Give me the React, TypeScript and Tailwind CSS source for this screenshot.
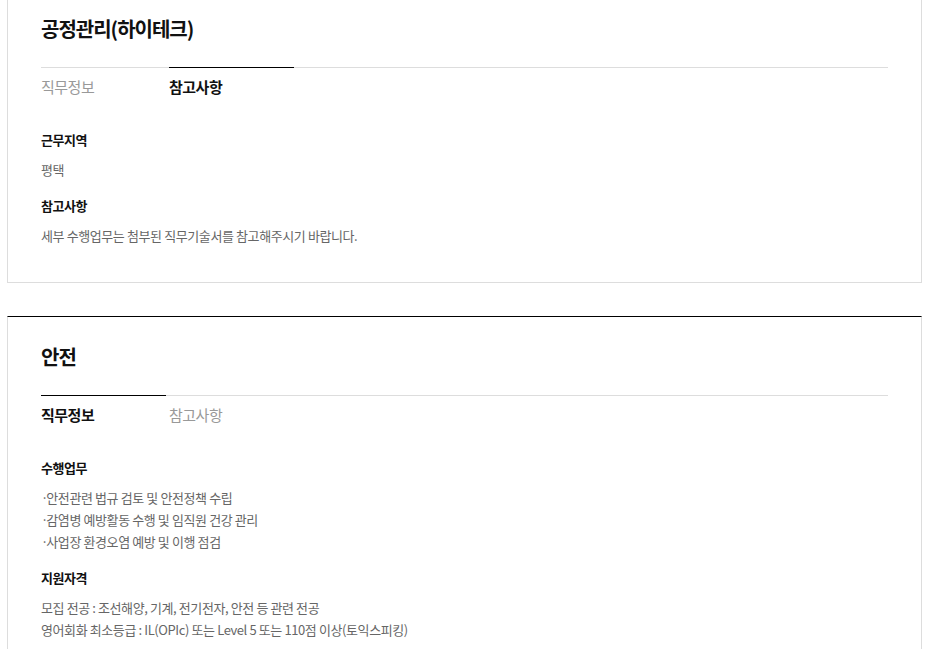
import { useState } from 'react';

type Section = { title: string; lines: string[] };

type Job = {
    name: string;
    tabs: { label: string; sections: Section[] }[];
    initialTab: number;
};

const jobs: Job[] = [
    {
        name: '공정관리(하이테크)',
        initialTab: 1,
        tabs: [
            { label: '직무정보', sections: [] },
            {
                label: '참고사항',
                sections: [
                    { title: '근무지역', lines: ['평택'] },
                    { title: '참고사항', lines: ['세부 수행업무는 첨부된 직무기술서를 참고해주시기 바랍니다.'] },
                ],
            },
        ],
    },
    {
        name: '안전',
        initialTab: 0,
        tabs: [
            {
                label: '직무정보',
                sections: [
                    {
                        title: '수행업무',
                        lines: [
                            '·안전관련 법규 검토 및 안전정책 수립',
                            '·감염병 예방활동 수행 및 임직원 건강 관리',
                            '·사업장 환경오염 예방 및 이행 점검',
                        ],
                    },
                    {
                        title: '지원자격',
                        lines: [
                            '모집 전공 : 조선해양, 기계, 전기전자, 안전 등 관련 전공',
                            '영어회화 최소등급 : IL(OPIc) 또는 Level 5 또는 110점 이상(토익스피킹)',
                        ],
                    },
                ],
            },
            { label: '참고사항', sections: [] },
        ],
    },
];

const Line = ({ text }: { text: string }) => {
    // bullet dot sits tight against the text
    if (text.startsWith('·')) {
        return (
            <p className="text-[13px] leading-[22px] tracking-[-0.4px] text-[#666]">
                <span className="tracking-[-2px]">·</span>
                {text.slice(1)}
            </p>
        );
    }
    return <p className="text-[13px] leading-[22px] tracking-[-0.4px] text-[#666]">{text}</p>;
};

const JobCard = ({ job, first }: { job: Job; first?: boolean }) => {
    const [tab, setTab] = useState(job.initialTab);
    const current = job.tabs[tab];

    return (
        <div
            className={`border border-[#dddddd] bg-white px-[33px] pb-[35px] ${
                first ? '' : 'border-t-black'
            }`}
        >
            {/* Title */}
            <h3
                className={`pb-[24px] text-[20px] leading-[28px] font-bold tracking-[-1px] text-[#111] ${
                    first ? 'pt-[25px]' : 'pt-[26px]'
                }`}
            >
                {job.name}
            </h3>

            {/* Tabs */}
            <div className="flex gap-[3px] border-t border-[#dddddd]">
                {job.tabs.map((t, i) => (
                    <button
                        key={t.label}
                        onClick={() => setTab(i)}
                        className={`-mt-px w-[125px] border-t pt-[9px] text-left text-[15px] leading-[20px] tracking-[-0.5px] ${
                            i === tab
                                ? 'border-black font-bold text-[#111]'
                                : 'border-transparent text-[#999]'
                        }`}
                    >
                        {t.label}
                    </button>
                ))}
            </div>

            {/* Content */}
            <div className="pt-[34px]">
                {current.sections.map((s, si) => (
                    <div key={s.title} className={si > 0 ? 'mt-[16px]' : ''}>
                        <h4 className="text-[13px] leading-[18px] font-bold tracking-[-0.5px] text-[#111]">
                            {s.title}
                        </h4>
                        <div className="mt-[10px]">
                            {s.lines.map((l) => (
                                <Line key={l} text={l} />
                            ))}
                        </div>
                    </div>
                ))}
            </div>
        </div>
    );
};

export default function App() {
    return (
        <div
            className="min-h-screen bg-white pl-[7px] pr-[3px]"
            style={{ fontFamily: '"Noto Sans CJK KR", "Noto Sans", sans-serif' }}
        >
            <div className="-mt-[11px] flex flex-col gap-[33px]">
                {jobs.map((j, i) => (
                    <JobCard key={j.name} job={j} first={i === 0} />
                ))}
            </div>
        </div>
    );
}
